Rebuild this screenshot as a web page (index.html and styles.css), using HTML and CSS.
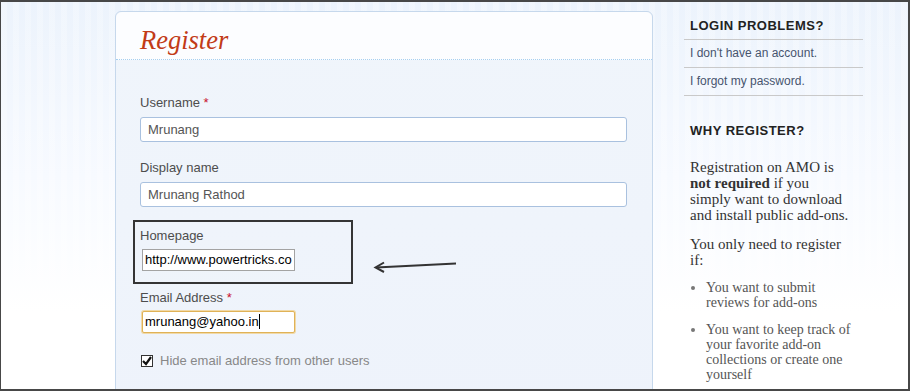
FILE: index.html
```html
<!DOCTYPE html>
<html lang="en">
<head>
  <meta charset="UTF-8" />
  <title>Register</title>
  <link rel="stylesheet" href="styles.css">
</head>
<body>
  <div class="frame">
    <div class="card">
      <div class="card-head">
        <h1>Register</h1>
      </div>
      <form class="card-body">
        <div class="field">
          <label>Username <span class="req">*</span></label>
          <div class="input">Mrunang</div>
        </div>
        <div class="field">
          <label>Display name</label>
          <div class="input">Mrunang Rathod</div>
        </div>
        <div class="field marked">
          <label>Homepage</label>
          <div class="input plain">http://www.powertricks.co</div>
        </div>
        <div class="field email">
          <label>Email Address <span class="req">*</span></label>
          <div class="input plain focus">mrunang@yahoo.in<span class="caret"></span></div>
        </div>
        <div class="check-row">
          <span class="check">
            <svg width="10" height="10" viewBox="0 0 10 10"><path d="M1 5 L4 8 L9 1" fill="none" stroke="#111" stroke-width="2.2"/></svg>
          </span>
          <span>Hide email address from other users</span>
        </div>
      </form>
    </div>

    <div class="sidebar">
      <h2 class="top">LOGIN PROBLEMS?</h2>
      <ul class="links">
        <li>I don't have an account.</li>
        <li>I forgot my password.</li>
      </ul>
      <h2 class="why">WHY REGISTER?</h2>
      <p class="intro">Registration on AMO is<br><b>not required</b> if you<br>simply want to download<br>and install public add-ons.</p>
      <p class="intro second">You only need to register<br>if:</p>
      <ul class="reasons">
        <li>You want to submit<br>reviews for add-ons</li>
        <li>You want to keep track of<br>your favorite add-on<br>collections or create one<br>yourself</li>
      </ul>
    </div>

    <!-- annotation arrow -->
    <svg class="arrow" width="86" height="16" viewBox="0 0 86 16">
      <path d="M83 3.5 L3 7.5" stroke="#333" stroke-width="2" fill="none"/>
      <path d="M11 2.5 L2.5 7.5 L11 12" stroke="#333" stroke-width="2" fill="none"/>
    </svg>
  </div>
</body>
</html>
```

FILE: styles.css
```css
body {
  margin: 0;
  font-family: "Liberation Sans", Arial, sans-serif;
}

.frame {
  position: relative;
  box-sizing: border-box;
  width: 910px;
  height: 391px;
  border: 2px solid #474747;
  border-left-width: 1px;
  overflow: hidden;
  display: flex;
  align-items: flex-start;
  padding: 9px 0 0 114px;
  background:
    repeating-linear-gradient(90deg, rgba(255,255,255,0.25) 0 6px, rgba(255,255,255,0) 6px 12px),
    linear-gradient(#ecf3fc, #f7faff 45%, #ffffff 80%);
}

.card {
  width: 538px;
  height: 420px;
  flex-shrink: 0;
  box-sizing: border-box;
  border: 1px solid #c6d8ec;
  border-radius: 6px 6px 0 0;
  background: linear-gradient(#f0f5fb, #eef3fb);
}

.card-head {
  height: 48px;
  box-sizing: border-box;
  padding: 13px 24px 0;
  background: #fcfdff;
  border-bottom: 1px dotted #a6cff0;
  border-radius: 6px 6px 0 0;
}

h1 {
  margin: 0;
  font-family: "Liberation Serif", "Times New Roman", serif;
  font-style: italic;
  font-weight: normal;
  font-size: 26.5px;
  line-height: 30px;
  color: #c23b17;
}

.card-body {
  padding: 33px 25px 0 24px;
}

.field {
  margin-bottom: 16px;
}

.field label {
  display: block;
  font-size: 13px;
  line-height: 16px;
  padding-top: 2px;
  color: #4d4d4d;
  margin-bottom: 6px;
}

.req {
  color: #c8102e;
}

.input {
  box-sizing: border-box;
  height: 25px;
  line-height: 23px;
  padding: 0 7px;
  border: 1px solid #a9c1df;
  border-radius: 3px;
  background: #fff;
  font-size: 13px;
  color: #555;
}

.field.marked {
  width: 220px;
  box-sizing: border-box;
  margin: -3px 0 0 -7px;
  border: 2px solid #353535;
  padding: 4px 5px 11px;
}

.field.marked label,
.field.email label {
  margin-bottom: 5px;
}

.input.plain {
  width: 153px;
  height: 22px;
  line-height: 20px;
  margin-left: 2px;
  padding: 0 2px;
  border-radius: 0;
  border-color: #a3a3a3;
  color: #000;
  white-space: nowrap;
  overflow: hidden;
}

.field.email {
  margin-top: 4px;
  margin-bottom: 20px;
}

.input.focus {
  border: 1px solid #e0b257;
  box-shadow: 0 0 0 1px #f0d9a8;
  border-radius: 2px;
}

.caret {
  display: inline-block;
  width: 1px;
  height: 15px;
  background: #000;
  vertical-align: -3px;
}

.check-row {
  display: flex;
  align-items: center;
  gap: 7px;
  margin-left: 1px;
  font-size: 13px;
  color: #888;
}

.check {
  width: 12px;
  height: 12px;
  box-sizing: border-box;
  border: 1px solid #333;
  background: #fff;
  display: flex;
  align-items: center;
  justify-content: center;
}

.sidebar {
  width: 179px;
  flex-shrink: 0;
  margin-left: 31px;
}

h2 {
  margin: 0;
  padding: 0 6px;
  font-size: 13px;
  line-height: 16px;
  letter-spacing: 0.5px;
  color: #222;
}

h2.top {
  padding-top: 7px;
  padding-bottom: 5px;
  border-bottom: 1px solid #c9c9c9;
}

.links {
  list-style: none;
  margin: 0;
  padding: 0;
}

.links li {
  line-height: 27px;
  padding: 0 6px;
  font-size: 12px;
  color: #47546e;
  border-bottom: 1px solid #c9c9c9;
}

h2.why {
  margin-top: 27px;
}

.intro {
  margin: 20px 0 0;
  padding: 0 6px;
  font-family: "Liberation Serif", "Times New Roman", serif;
  font-size: 15px;
  line-height: 16px;
  color: #333;
}

.intro.second {
  margin-top: 13px;
}

.reasons {
  margin: 12px 0 0;
  padding: 0 6px 0 22px;
  font-family: "Liberation Serif", "Times New Roman", serif;
  font-size: 14px;
  line-height: 15px;
  color: #555;
}

.reasons li {
  margin-bottom: 12px;
}

.reasons li::marker {
  color: #777;
}

.arrow {
  position: absolute;
  left: 372px;
  top: 258px;
}
```
